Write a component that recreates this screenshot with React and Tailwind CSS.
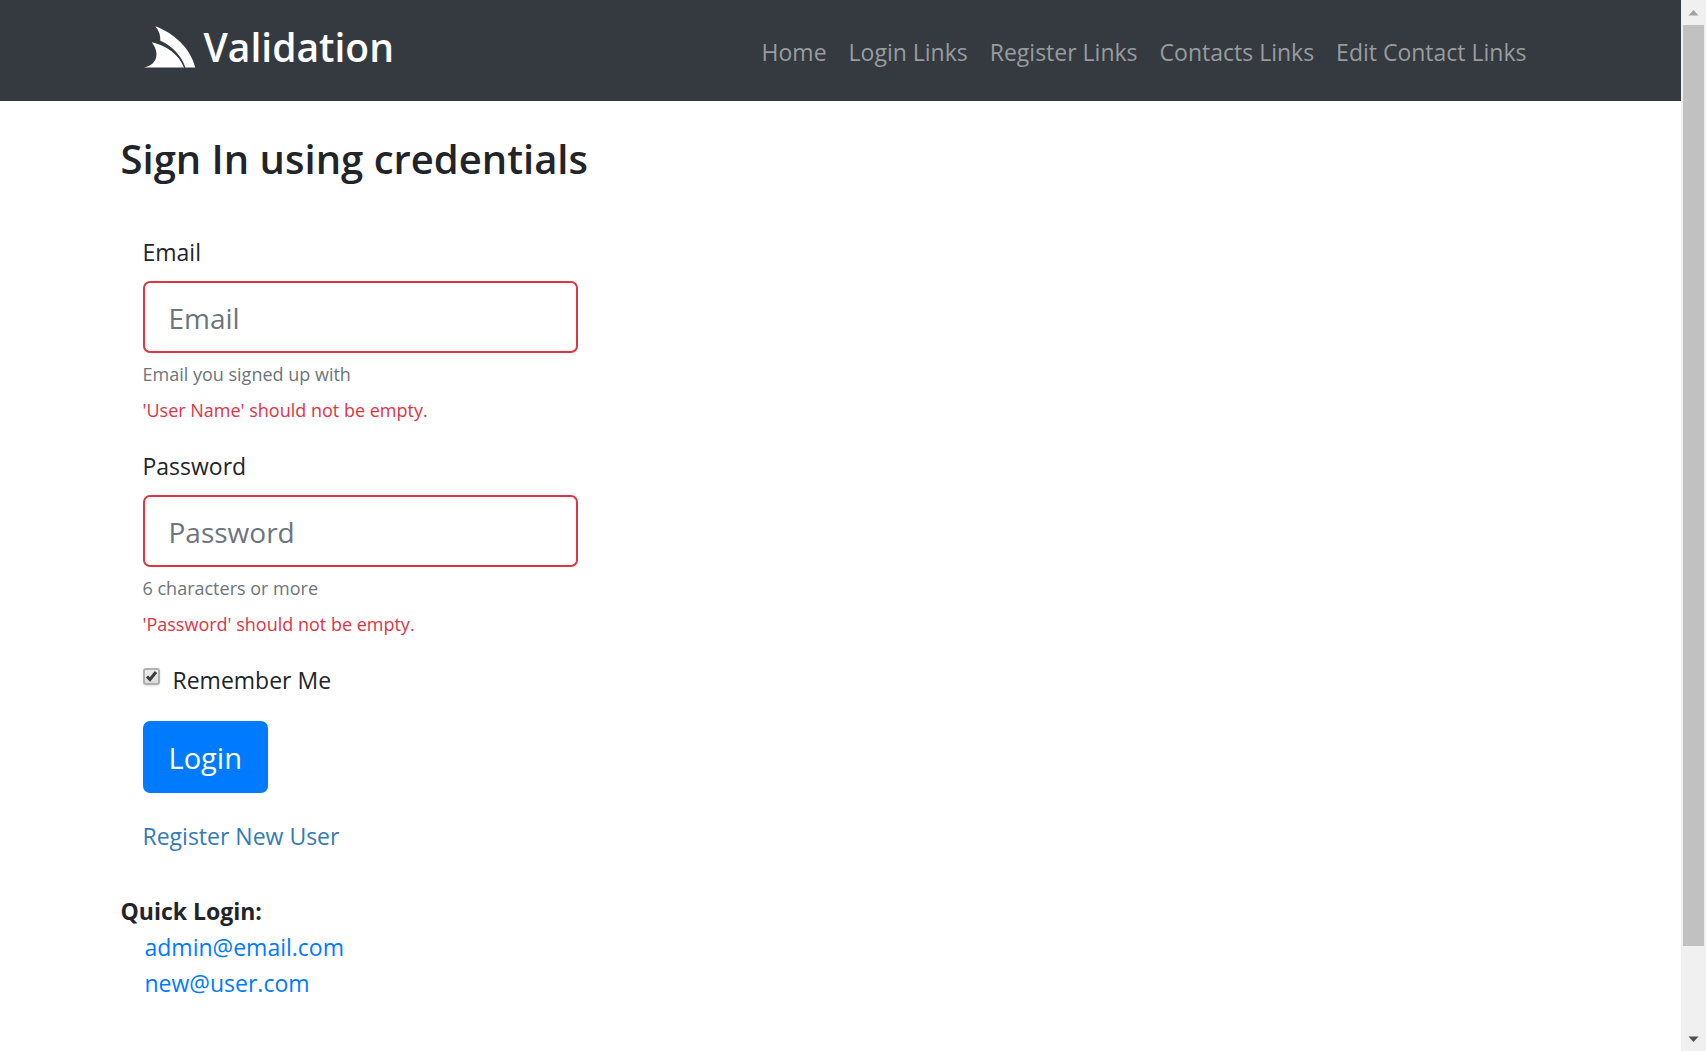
import { useState } from 'react';

const navLinks = ['Home', 'Login Links', 'Register Links', 'Contacts Links', 'Edit Contact Links'];
const quickLogins = ['admin@email.com', 'new@user.com'];

function Logo() {
  return (
    <svg viewBox="0 0 53 42" className="h-[42px] w-[53px] fill-white" aria-hidden="true">
      <path d="M12.2 0.3C31 7 47.5 22.5 52.3 41.6H42.3C39.5 31 29 19.5 17.3 14.8C17.6 9.5 16 4.5 12.2 0.3Z" />
      <path d="M8.8 16.2C23.5 19.5 36 28.5 41 41.6H0.2C12 40 18.5 29 8.8 16.2Z" />
    </svg>
  );
}

function NavBar() {
  return (
    <header className="bg-[#343a40]">
      <div className="mx-auto flex h-[101px] max-w-[1440px] items-start justify-between px-[22px]">
        <a href="#" className="mt-5 flex items-center gap-2 text-white">
          <Logo />
          <span className="text-[39px] leading-[54px] font-semibold">Validation</span>
        </a>
        <nav className="mt-8 flex gap-[22px] pr-3 text-[23px] leading-10 text-[#999c9f]">
          {navLinks.map((label) => (
            <a key={label} href="#">{label}</a>
          ))}
        </nav>
      </div>
    </header>
  );
}

function Field({ id, label, type, help, error }) {
  return (
    <div className="mb-5">
      <label htmlFor={id} className="mb-[11px] block text-[23px] leading-9">{label}</label>
      <input
        id={id}
        type={type}
        placeholder={label}
        aria-invalid="true"
        aria-describedby={id + '-help'}
        className="block h-[72px] w-full rounded-[7px] border-2 border-[#dc3545] bg-white px-6 pt-0.5 text-[28px] leading-9 outline-none placeholder:text-[#6c757d]"
      />
      <div id={id + '-help'} className="pt-[3px] text-[18px] leading-9 text-[#6c757d]">{help}</div>
      <div className="text-[18px] leading-9 text-[#dc3545]">{error}</div>
    </div>
  );
}

function LoginForm() {
  const [remember, setRemember] = useState(true);
  return (
    <form className="mt-12 px-[22px]" onSubmit={(e) => e.preventDefault()}>
      <div className="w-[435px] max-w-full">
        <Field id="email" label="Email" type="text" help="Email you signed up with" error="'User Name' should not be empty." />
        <Field id="password" label="Password" type="password" help="6 characters or more" error="'Password' should not be empty." />
      </div>
      <label className="flex items-start gap-3 text-[23px] leading-9">
        <span className="mt-1.5 grid size-[18px]">
          <input
            type="checkbox"
            checked={remember}
            onChange={(e) => setRemember(e.target.checked)}
            className="peer col-start-1 row-start-1 size-[17px] appearance-none rounded-[3px] border-2 border-[#b0b0b0] bg-linear-to-b from-[#ededed] to-[#dcdcdc] shadow-sm"
          />
          <svg viewBox="0 0 18 18" className="pointer-events-none invisible col-start-1 row-start-1 size-[18px] fill-none stroke-[#3c3c3c] stroke-[3] peer-checked:visible" aria-hidden="true">
            <path d="M4 8.5L7 11.5L13 4" />
          </svg>
        </span>
        Remember Me
      </label>
      <button type="submit" className="mt-[23px] block h-[72px] rounded-[7px] bg-[#007bff] px-[26px] pt-0.5 text-[29px] leading-9 text-white">Login</button>
      <a href="#" className="mt-[25px] inline-block text-[23px] leading-9 text-[#337ab7]">Register New User</a>
    </form>
  );
}

function QuickLogin() {
  return (
    <section className="mt-[39px] text-[23px] leading-9">
      <h2 className="font-bold">Quick Login:</h2>
      <ul className="pl-6">
        {quickLogins.map((email) => (
          <li key={email}><a href="#" className="text-[#007bff]">{email}</a></li>
        ))}
      </ul>
    </section>
  );
}

function ScrollRail() {
  return (
    <div className="sticky top-0 flex h-screen w-[25px] shrink-0 flex-col bg-[#f0f0f0]" aria-hidden="true">
      <svg viewBox="0 0 25 25" className="size-[25px]"><path d="M7.5 15.5L12.5 10L17.5 15.5Z" fill="#a3a3a3" /></svg>
      <div className="mx-0.5 grow-[92] bg-[#c1c1c1]" />
      <div className="grow-[8]" />
      <svg viewBox="0 0 25 25" className="size-[25px]"><path d="M7.5 10.5H17.5L12.5 16Z" fill="#505050" /></svg>
    </div>
  );
}

export default function App() {
  return (
    <div className="flex min-h-screen items-start bg-white font-['Open_Sans',sans-serif] text-[#212529]">
      <div className="min-w-0 grow">
        <NavBar />
        <main className="mx-auto max-w-[1440px] pt-[31px]">
          <h1 className="text-[40px] leading-[54px] font-semibold">Sign In using credentials</h1>
          <LoginForm />
          <QuickLogin />
        </main>
      </div>
      <ScrollRail />
    </div>
  );
}
